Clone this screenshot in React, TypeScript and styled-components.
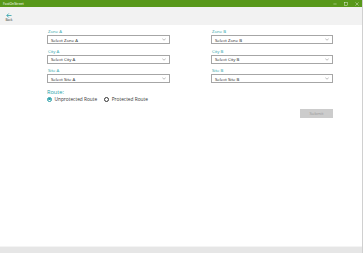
import React from 'react';
import styled, { createGlobalStyle } from 'styled-components';

const GlobalStyle = createGlobalStyle`
  html, body {
    margin: 0;
    padding: 0;
    width: 363px;
    height: 253px;
    overflow: hidden;
    background: #ffffff;
    font-family: "Open Sans", "Noto Sans", sans-serif;
  }
  #root {
    height: 100%;
  }
`;

const Window = styled.div`
  display: flex;
  flex-direction: column;
  width: 363px;
  height: 253px;
  box-sizing: border-box;
  border-right: 1px solid #d0d0d0;
`;

const TitleBar = styled.div`
  display: flex;
  align-items: center;
  justify-content: space-between;
  height: 7px;
  background: #58981a;
  color: #ffffff;
  padding-left: 3px;
`;

const AppTitle = styled.span`
  font-size: 3.4px;
  line-height: 7px;
`;

const WindowControls = styled.div`
  display: flex;
  height: 100%;
`;

const ControlButton = styled.div`
  width: 11px;
  height: 100%;
  display: flex;
  align-items: center;
  justify-content: center;
`;

const Header = styled.div`
  display: flex;
  height: 18px;
  background: #f2f2f2;
  padding-left: 4px;
`;

const BackButton = styled.div`
  display: flex;
  flex-direction: column;
  align-items: center;
  padding-top: 6px;
  width: 10px;
`;

const BackLabel = styled.span`
  font-size: 3.2px;
  line-height: 5px;
  color: #333333;
`;

const Content = styled.div`
  flex: 1;
  padding: 2px 29px 0 47px;
`;

const Columns = styled.div`
  display: grid;
  grid-template-columns: 123px 122px;
  column-gap: 41px;
`;

const Column = styled.div`
  display: flex;
  flex-direction: column;
`;

const Field = styled.div`
  display: flex;
  flex-direction: column;
  margin-bottom: 2.5px;
`;

const Label = styled.label`
  font-size: 4.3px;
  line-height: 8px;
  color: #2a9fa8;
  padding-left: 1px;
`;

const SelectBox = styled.div`
  display: flex;
  align-items: center;
  justify-content: space-between;
  height: 9px;
  box-sizing: border-box;
  border: 1px solid #a6a6a6;
  background: #ffffff;
  padding: 0 3px 0 3px;
  font-size: 4.3px;
  color: #222222;
`;

const RouteSection = styled.div`
  display: flex;
  flex-direction: column;
  margin-top: 2px;
`;

const RouteLabel = styled.div`
  font-size: 5.6px;
  line-height: 8px;
  color: #2a9fa8;
`;

const RadioRow = styled.div`
  display: flex;
  align-items: center;
  gap: 7px;
  height: 7px;
`;

const RadioOption = styled.div`
  display: flex;
  align-items: center;
  gap: 2.5px;
  font-size: 4.8px;
  color: #333333;
`;

const RadioCircle = styled.span<{ checked?: boolean }>`
  width: 5px;
  height: 5px;
  box-sizing: border-box;
  border-radius: 50%;
  border: 0.8px solid ${({ checked }) => (checked ? '#2a9fa8' : '#333333')};
  display: flex;
  align-items: center;
  justify-content: center;

  &::after {
    content: '';
    width: 2.4px;
    height: 2.4px;
    border-radius: 50%;
    background: ${({ checked }) => (checked ? '#2a9fa8' : 'transparent')};
  }
`;

const Actions = styled.div`
  display: flex;
  justify-content: flex-end;
  margin-top: 6px;
`;

const SubmitButton = styled.button`
  width: 33px;
  height: 9px;
  border: none;
  padding: 0;
  background: #cccccc;
  color: #9a9a9a;
  font-family: inherit;
  font-size: 4.2px;
`;

const BottomBar = styled.div`
  height: 6px;
  background: #e6e6e6;
  border-top: 1px solid #f4f4f4;
`;

const Chevron = () => (
  <svg width="4" height="3" viewBox="0 0 8 5">
    <path d="M0.5 0.5 L4 4 L7.5 0.5" fill="none" stroke="#777" strokeWidth="1" />
  </svg>
);

const fieldsA = [
  { label: 'Zone A', placeholder: 'Select Zone A' },
  { label: 'City A', placeholder: 'Select City A' },
  { label: 'Site A', placeholder: 'Select Site A' },
];

const fieldsB = [
  { label: 'Zone B', placeholder: 'Select Zone B' },
  { label: 'City B', placeholder: 'Select City B' },
  { label: 'Site B', placeholder: 'Select Site B' },
];

const SelectField = ({ label, placeholder }: { label: string; placeholder: string }) => (
  <Field>
    <Label>{label}</Label>
    <SelectBox>
      <span>{placeholder}</span>
      <Chevron />
    </SelectBox>
  </Field>
);

export default function App() {
  return (
    <>
      <GlobalStyle />
      <Window>
        <TitleBar>
          <AppTitle>FastOnStreet</AppTitle>
          <WindowControls>
            <ControlButton>
              <svg width="4" height="4" viewBox="0 0 10 10">
                <path d="M1 5 H9" stroke="#fff" strokeWidth="1" />
              </svg>
            </ControlButton>
            <ControlButton>
              <svg width="4" height="4" viewBox="0 0 10 10">
                <rect x="1" y="1" width="8" height="8" fill="none" stroke="#fff" strokeWidth="1" />
              </svg>
            </ControlButton>
            <ControlButton>
              <svg width="4" height="4" viewBox="0 0 10 10">
                <path d="M1 1 L9 9 M9 1 L1 9" stroke="#fff" strokeWidth="1" />
              </svg>
            </ControlButton>
          </WindowControls>
        </TitleBar>
        <Header>
          <BackButton>
            <svg width="6" height="5" viewBox="0 0 12 10">
              <path d="M11 5 H2 M5.5 1 L1.5 5 L5.5 9" fill="none" stroke="#2a9fa8" strokeWidth="1.6" />
            </svg>
            <BackLabel>Back</BackLabel>
          </BackButton>
        </Header>
        <Content>
          <Columns>
            <Column>
              {fieldsA.map((f) => (
                <SelectField key={f.label} {...f} />
              ))}
              <RouteSection>
                <RouteLabel>Route:</RouteLabel>
                <RadioRow>
                  <RadioOption>
                    <RadioCircle checked />
                    Unprotected Route
                  </RadioOption>
                  <RadioOption>
                    <RadioCircle />
                    Protected Route
                  </RadioOption>
                </RadioRow>
              </RouteSection>
            </Column>
            <Column>
              {fieldsB.map((f) => (
                <SelectField key={f.label} {...f} />
              ))}
            </Column>
          </Columns>
          <Actions>
            <SubmitButton disabled>Submit</SubmitButton>
          </Actions>
        </Content>
        <BottomBar />
      </Window>
    </>
  );
}
